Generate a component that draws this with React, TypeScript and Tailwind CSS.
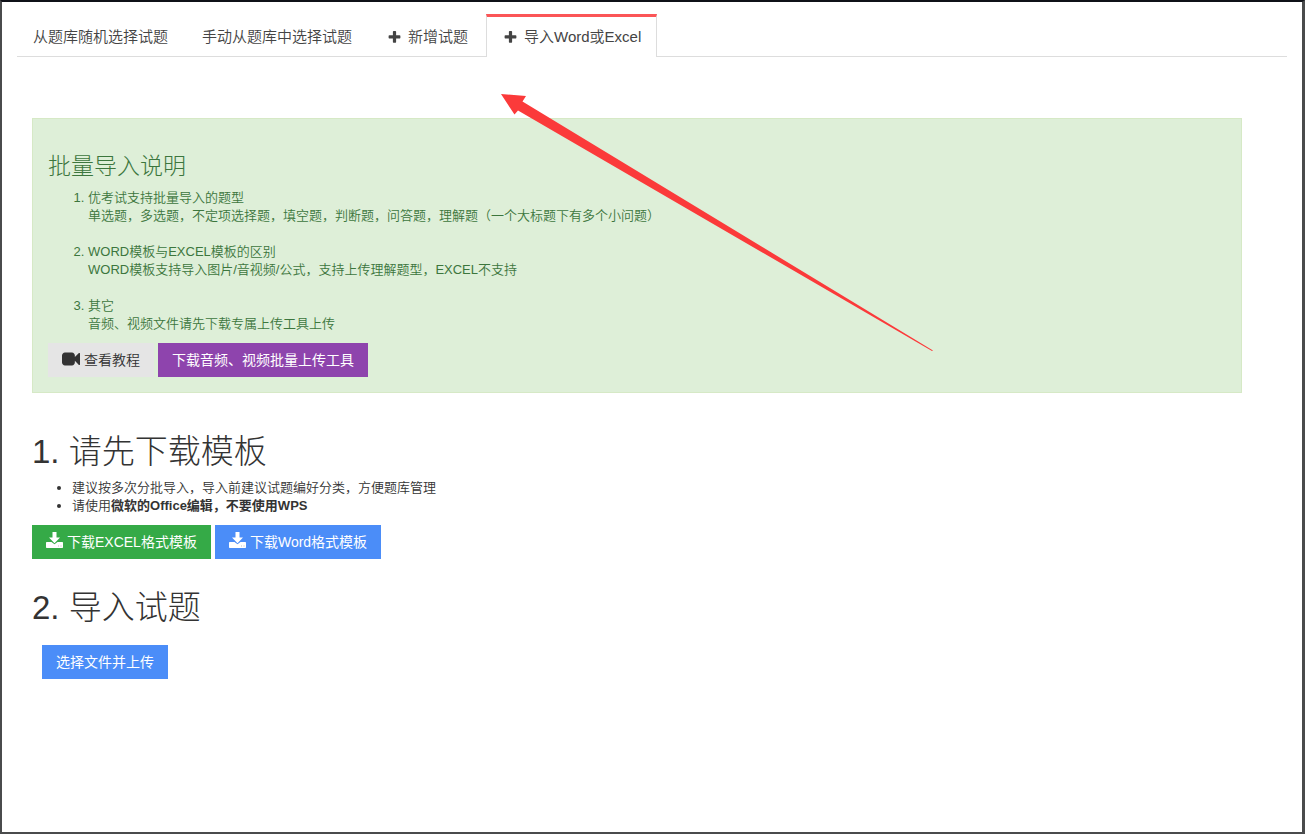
import { useState, type ReactNode } from 'react';

const LINK_BASE = 'inline-flex h-[34px] items-center gap-1 px-3.5 text-sm';

function PlusIcon() {
  return (
    <svg viewBox="0 0 1792 1792" className="mx-px size-[15px] shrink-0" fill="currentColor" aria-hidden="true">
      <path d="M1600 736v192q0 40-28 68t-68 28h-416v416q0 40-28 68t-68 28h-192q-40 0-68-28t-28-68v-416h-416q-40 0-68-28t-28-68v-192q0-40 28-68t68-28h416v-416q0-40 28-68t68-28h192q40 0 68 28t28 68v416h416q40 0 68 28t28 68z" />
    </svg>
  );
}

function VideoIcon() {
  return (
    <svg viewBox="0 0 1792 1792" className="mb-0.5 size-[18px] shrink-0" fill="currentColor" aria-hidden="true">
      <path d="M1792 352v1088q0 42-39 59-13 5-25 5-27 0-45-19l-403-403v166q0 119-84.5 203.5t-203.5 84.5h-704q-119 0-203.5-84.5t-84.5-203.5v-704q0-119 84.5-203.5t203.5-84.5h704q119 0 203.5 84.5t84.5 203.5v165l403-402q18-19 45-19 12 0 25 5 39 17 39 59z" />
    </svg>
  );
}

function DownloadIcon() {
  return (
    <svg viewBox="0 0 17 16" className="mb-1 h-4 w-[17px] shrink-0" fill="currentColor" aria-hidden="true">
      <path d="M6.500 0h4v5.500h3.500L8.500 11.200 3 5.500h3.500z" />
      <path d="M.7 10h4.800L8.500 12.300l3-2.300h4.800q.7 0 .7.700v4.600q0 .7-.7.700H.7q-.7 0-.7-.7v-4.600q0-.7.7-.7z" />
      <path fill="#000" fillOpacity=".25" d="M12 13.500h1v1h-1zM14.500 13.500h1v1h-1z" />
    </svg>
  );
}

const TABS: { label: string; plus: boolean }[] = [
  { label: '从题库随机选择试题', plus: false },
  { label: '手动从题库中选择试题', plus: false },
  { label: '新增试题', plus: true },
  { label: '导入Word或Excel', plus: true },
];

function Tabs() {
  const [active, setActive] = useState(3);
  return (
    <nav className="flex border-b border-[#ddd]">
      {TABS.map((tab, i) => (
        <a
          key={tab.label}
          href="#"
          aria-current={i === active ? 'page' : undefined}
          onClick={(e) => {
            e.preventDefault();
            setActive(i);
          }}
          className={
            'mr-0.5 -mb-px flex h-[43px] items-center gap-[5px] border-x border-t-3 px-[15px] text-[15px] text-[#444] ' +
            (i === active ? 'border-x-[#ddd] border-t-[#fb5557] bg-white' : 'border-transparent')
          }
        >
          {tab.plus && <PlusIcon />}
          <span>{tab.label}</span>
        </a>
      ))}
    </nav>
  );
}

function Item({ title, children }: { title: string; children: ReactNode }) {
  return (
    <li>
      {title}
      <p>{children}</p>
    </li>
  );
}

export default function App() {
  return (
    <div className="relative min-h-screen overflow-hidden border-t-2 border-r-3 border-b-2 border-l-2 border-[#4a4b4c] border-t-[#0f1118] bg-white px-[15px] pt-3 font-['Liberation_Sans','Noto_Sans_CJK_SC',sans-serif] text-[13px] leading-[18px] font-[350] text-[#333]">
      <Tabs />

      <main className="mr-[45px] ml-[15px] pt-[61px]">
        <section className="border border-[#d6e9c6] bg-[#deefd8] p-[15px] text-[#3c763d]">
          <h3 className="mt-5 mb-2.5 text-[23px] leading-[25px] font-light">批量导入说明</h3>
          <ol className="mb-2.5 list-decimal space-y-[18px] pl-10">
            <Item title="优考试支持批量导入的题型">
              单选题，多选题，不定项选择题，填空题，判断题，问答题，理解题（一个大标题下有多个小问题）
            </Item>
            <Item title="WORD模板与EXCEL模板的区别">
              WORD模板支持导入图片/音视频/公式，支持上传理解题型，EXCEL不支持
            </Item>
            <Item title="其它">音频、视频文件请先下载专属上传工具上传</Item>
          </ol>
          <div className="flex gap-1">
            <a href="#" className={LINK_BASE + ' bg-[#e5e5e5] text-[#333]'}>
              <VideoIcon />
              查看教程
            </a>
            <a href="#" className={LINK_BASE + ' bg-[#8e44ad] font-normal text-white'}>
              下载音频、视频批量上传工具
            </a>
          </div>
        </section>

        <section>
          <h1 className="mt-10 mb-2.5 pt-0.5 text-[33px] leading-[34px] font-light">1. 请先下载模板</h1>
          <ul className="mb-2.5 list-disc pl-10">
            <li>建议按多次分批导入，导入前建议试题编好分类，方便题库管理</li>
            <li>
              请使用<b className="font-bold">微软的Office编辑，不要使用WPS</b>
            </li>
          </ul>
          <div className="flex gap-1">
            <a href="#" className={LINK_BASE + ' bg-[#35aa47] font-normal text-white'}>
              <DownloadIcon />
              下载EXCEL格式模板
            </a>
            <a href="#" className={LINK_BASE + ' bg-[#4b8df8] font-normal text-white'}>
              <DownloadIcon />
              下载Word格式模板
            </a>
          </div>
        </section>

        <section>
          <h1 className="mt-[30px] mb-5 pt-0.5 text-[33px] leading-[34px] font-light">2. 导入试题</h1>
          <button type="button" className={LINK_BASE + ' ml-2.5 bg-[#4b8df8] font-normal text-white'}>
            选择文件并上传
          </button>
        </section>
      </main>

      <svg
        viewBox="0 0 434 259"
        className="pointer-events-none absolute top-[91px] left-[498px] h-[259px] w-[434px]"
        fill="#fb3a3a"
        aria-hidden="true"
      >
        <path d="M1 1 26 3 22.500 8.500 433 257.500 432 258 18 17.500 14.500 21.500Z" />
      </svg>
    </div>
  );
}
